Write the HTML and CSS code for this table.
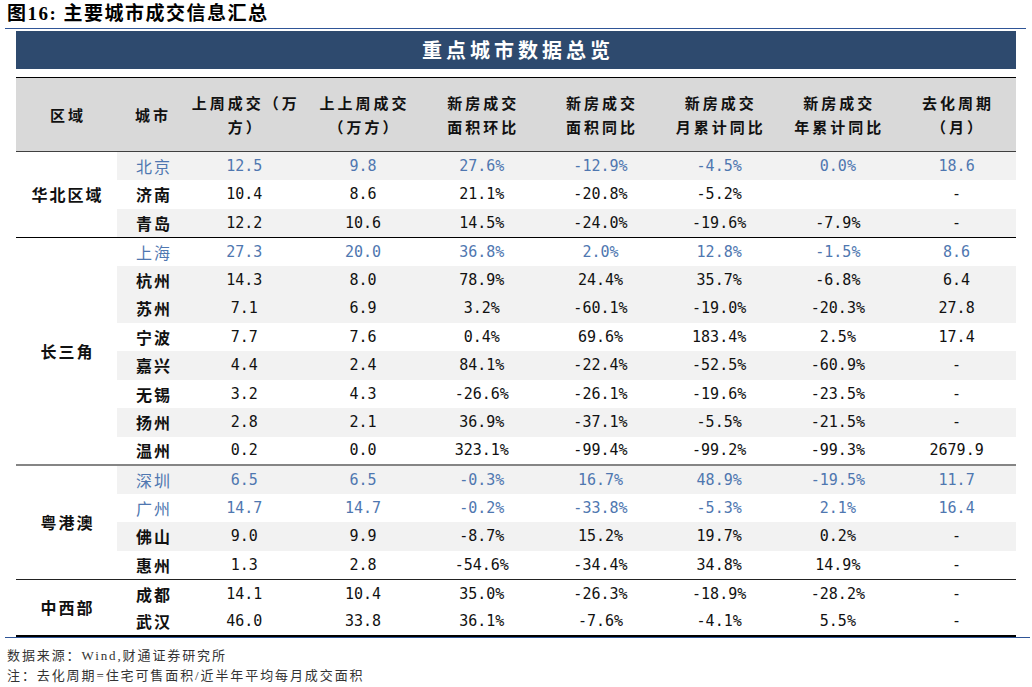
FILE: index.html
```html
<!DOCTYPE html>
<html lang="zh-CN">
<head>
<meta charset="utf-8">
<title>主要城市成交信息汇总</title>
<link rel="stylesheet" href="styles.css">
</head>
<body>
<div class="page">
  <h1 class="title">图16: 主要城市成交信息汇总</h1>
  <div class="rule"></div>
  <div class="banner">重点城市数据总览</div>
  <table class="data">
    <colgroup>
      <col class="c-region"><col class="c-city">
      <col><col><col><col><col><col><col>
    </colgroup>
    <thead>
      <tr>
        <th>区域</th>
        <th class="city-h">城市</th>
        <th>上周成交（万<br>方）</th>
        <th>上上周成交<br>（万方）</th>
        <th>新房成交<br>面积环比</th>
        <th>新房成交<br>面积同比</th>
        <th>新房成交<br>月累计同比</th>
        <th>新房成交<br>年累计同比</th>
        <th>去化周期<br>（月）</th>
      </tr>
    </thead>
    <tbody class="g1">
      <tr class="alt hl"><td rowspan="3" class="region">华北区域</td><td class="city">北京</td><td>12.5</td><td>9.8</td><td>27.6%</td><td>-12.9%</td><td>-4.5%</td><td>0.0%</td><td>18.6</td></tr>
      <tr><td class="city">济南</td><td>10.4</td><td>8.6</td><td>21.1%</td><td>-20.8%</td><td>-5.2%</td><td></td><td>-</td></tr>
      <tr class="alt"><td class="city">青岛</td><td>12.2</td><td>10.6</td><td>14.5%</td><td>-24.0%</td><td>-19.6%</td><td>-7.9%</td><td>-</td></tr>
    </tbody>
    <tbody class="g2">
      <tr class="hl"><td rowspan="8" class="region">长三角</td><td class="city">上海</td><td>27.3</td><td>20.0</td><td>36.8%</td><td>2.0%</td><td>12.8%</td><td>-1.5%</td><td>8.6</td></tr>
      <tr class="alt"><td class="city">杭州</td><td>14.3</td><td>8.0</td><td>78.9%</td><td>24.4%</td><td>35.7%</td><td>-6.8%</td><td>6.4</td></tr>
      <tr class="alt"><td class="city">苏州</td><td>7.1</td><td>6.9</td><td>3.2%</td><td>-60.1%</td><td>-19.0%</td><td>-20.3%</td><td>27.8</td></tr>
      <tr><td class="city">宁波</td><td>7.7</td><td>7.6</td><td>0.4%</td><td>69.6%</td><td>183.4%</td><td>2.5%</td><td>17.4</td></tr>
      <tr class="alt"><td class="city">嘉兴</td><td>4.4</td><td>2.4</td><td>84.1%</td><td>-22.4%</td><td>-52.5%</td><td>-60.9%</td><td>-</td></tr>
      <tr><td class="city">无锡</td><td>3.2</td><td>4.3</td><td>-26.6%</td><td>-26.1%</td><td>-19.6%</td><td>-23.5%</td><td>-</td></tr>
      <tr class="alt"><td class="city">扬州</td><td>2.8</td><td>2.1</td><td>36.9%</td><td>-37.1%</td><td>-5.5%</td><td>-21.5%</td><td>-</td></tr>
      <tr><td class="city">温州</td><td>0.2</td><td>0.0</td><td>323.1%</td><td>-99.4%</td><td>-99.2%</td><td>-99.3%</td><td>2679.9</td></tr>
    </tbody>
    <tbody class="g3">
      <tr class="alt hl"><td rowspan="4" class="region">粤港澳</td><td class="city">深圳</td><td>6.5</td><td>6.5</td><td>-0.3%</td><td>16.7%</td><td>48.9%</td><td>-19.5%</td><td>11.7</td></tr>
      <tr class="hl"><td class="city">广州</td><td>14.7</td><td>14.7</td><td>-0.2%</td><td>-33.8%</td><td>-5.3%</td><td>2.1%</td><td>16.4</td></tr>
      <tr class="alt"><td class="city">佛山</td><td>9.0</td><td>9.9</td><td>-8.7%</td><td>15.2%</td><td>19.7%</td><td>0.2%</td><td>-</td></tr>
      <tr><td class="city">惠州</td><td>1.3</td><td>2.8</td><td>-54.6%</td><td>-34.4%</td><td>34.8%</td><td>14.9%</td><td>-</td></tr>
    </tbody>
    <tbody class="g4">
      <tr><td rowspan="2" class="region">中西部</td><td class="city">成都</td><td>14.1</td><td>10.4</td><td>35.0%</td><td>-26.3%</td><td>-18.9%</td><td>-28.2%</td><td>-</td></tr>
      <tr><td class="city">武汉</td><td>46.0</td><td>33.8</td><td>36.1%</td><td>-7.6%</td><td>-4.1%</td><td>5.5%</td><td>-</td></tr>
    </tbody>
  </table>
  <div class="rule rule-bottom"></div>
  <div class="notes">
    <p>数据来源：Wind,财通证券研究所</p>
    <p>注：去化周期=住宅可售面积/近半年平均每月成交面积</p>
  </div>
</div>
</body>
</html>
```

FILE: styles.css
```css
* { box-sizing: border-box; }

body {
  margin: 0;
  background: #ffffff;
}

.page {
  width: 1032px;
  height: 687px;
  overflow: hidden;
}

.title {
  margin: 0;
  height: 28px;
  padding: 3px 0 0 7px;
  font: bold 19px/22px "Liberation Serif", "Noto Sans CJK SC", serif;
  letter-spacing: 1.5px;
  color: #000;
}

.rule {
  height: 1px;
  margin: 0 6px 0 5px;
  background: #2f5597;
}

.banner {
  margin: 2px 16px 0 16px;
  height: 38px;
  background: #2e4a6e;
  color: #ffffff;
  font: bold 20px/38px "Noto Sans CJK SC", sans-serif;
  letter-spacing: 4px;
  padding-left: 4px;
  text-align: center;
}

table.data {
  margin: 8px 0 0 16px;
  width: 1000px;
  border-collapse: collapse;
  table-layout: fixed;
}

.c-region { width: 101px; }
.c-city { width: 68px; }

thead tr {
  border-top: 1px solid #000;
  border-bottom: 1px solid #404040;
}

th {
  height: 74px;
  padding: 0 0 0 3px;
  background: #d9d9d9;
  font: bold 15px/24px "Noto Sans CJK SC", sans-serif;
  letter-spacing: 3px;
  color: #111;
  text-align: center;
  vertical-align: middle;
}

th.city-h {
  text-align: left;
  padding-left: 18px;
}

td {
  height: 28.5px;
  padding: 0;
  text-align: center;
  vertical-align: middle;
  font: 15px/20px "DejaVu Sans Mono", "Liberation Mono", monospace;
  color: #111;
  white-space: nowrap;
}

td.city {
  text-align: left;
  padding-left: 19px;
  font: bold 16px/20px "Noto Sans CJK SC", sans-serif;
  letter-spacing: 2px;
}

td.region {
  padding-left: 2px;
  background: #ffffff;
  font: bold 16px/20px "Noto Sans CJK SC", sans-serif;
  letter-spacing: 2px;
  color: #111;
}

tr.alt td { background: #f2f2f2; }
tr.alt td.region { background: #ffffff; }

tr.hl td { color: #4f77b0; }
tr.hl td.city { font-weight: normal; }
tr.hl td.region { color: #111; }

.g1 { border-bottom: 1px solid #000; }
.g2 { border-bottom: 2px solid #858585; }
.g3 { border-bottom: 1px solid #222; }
.g4 { border-bottom: 2px solid #000; }

.rule-bottom {
  margin: 0 2px 0 5px;
}

.notes {
  padding: 8px 0 0 7px;
  font: 13px/20px "Liberation Serif", "Noto Sans CJK SC", serif;
  letter-spacing: 1.9px;
  color: #333;
}

.notes p { margin: 0; }
```
